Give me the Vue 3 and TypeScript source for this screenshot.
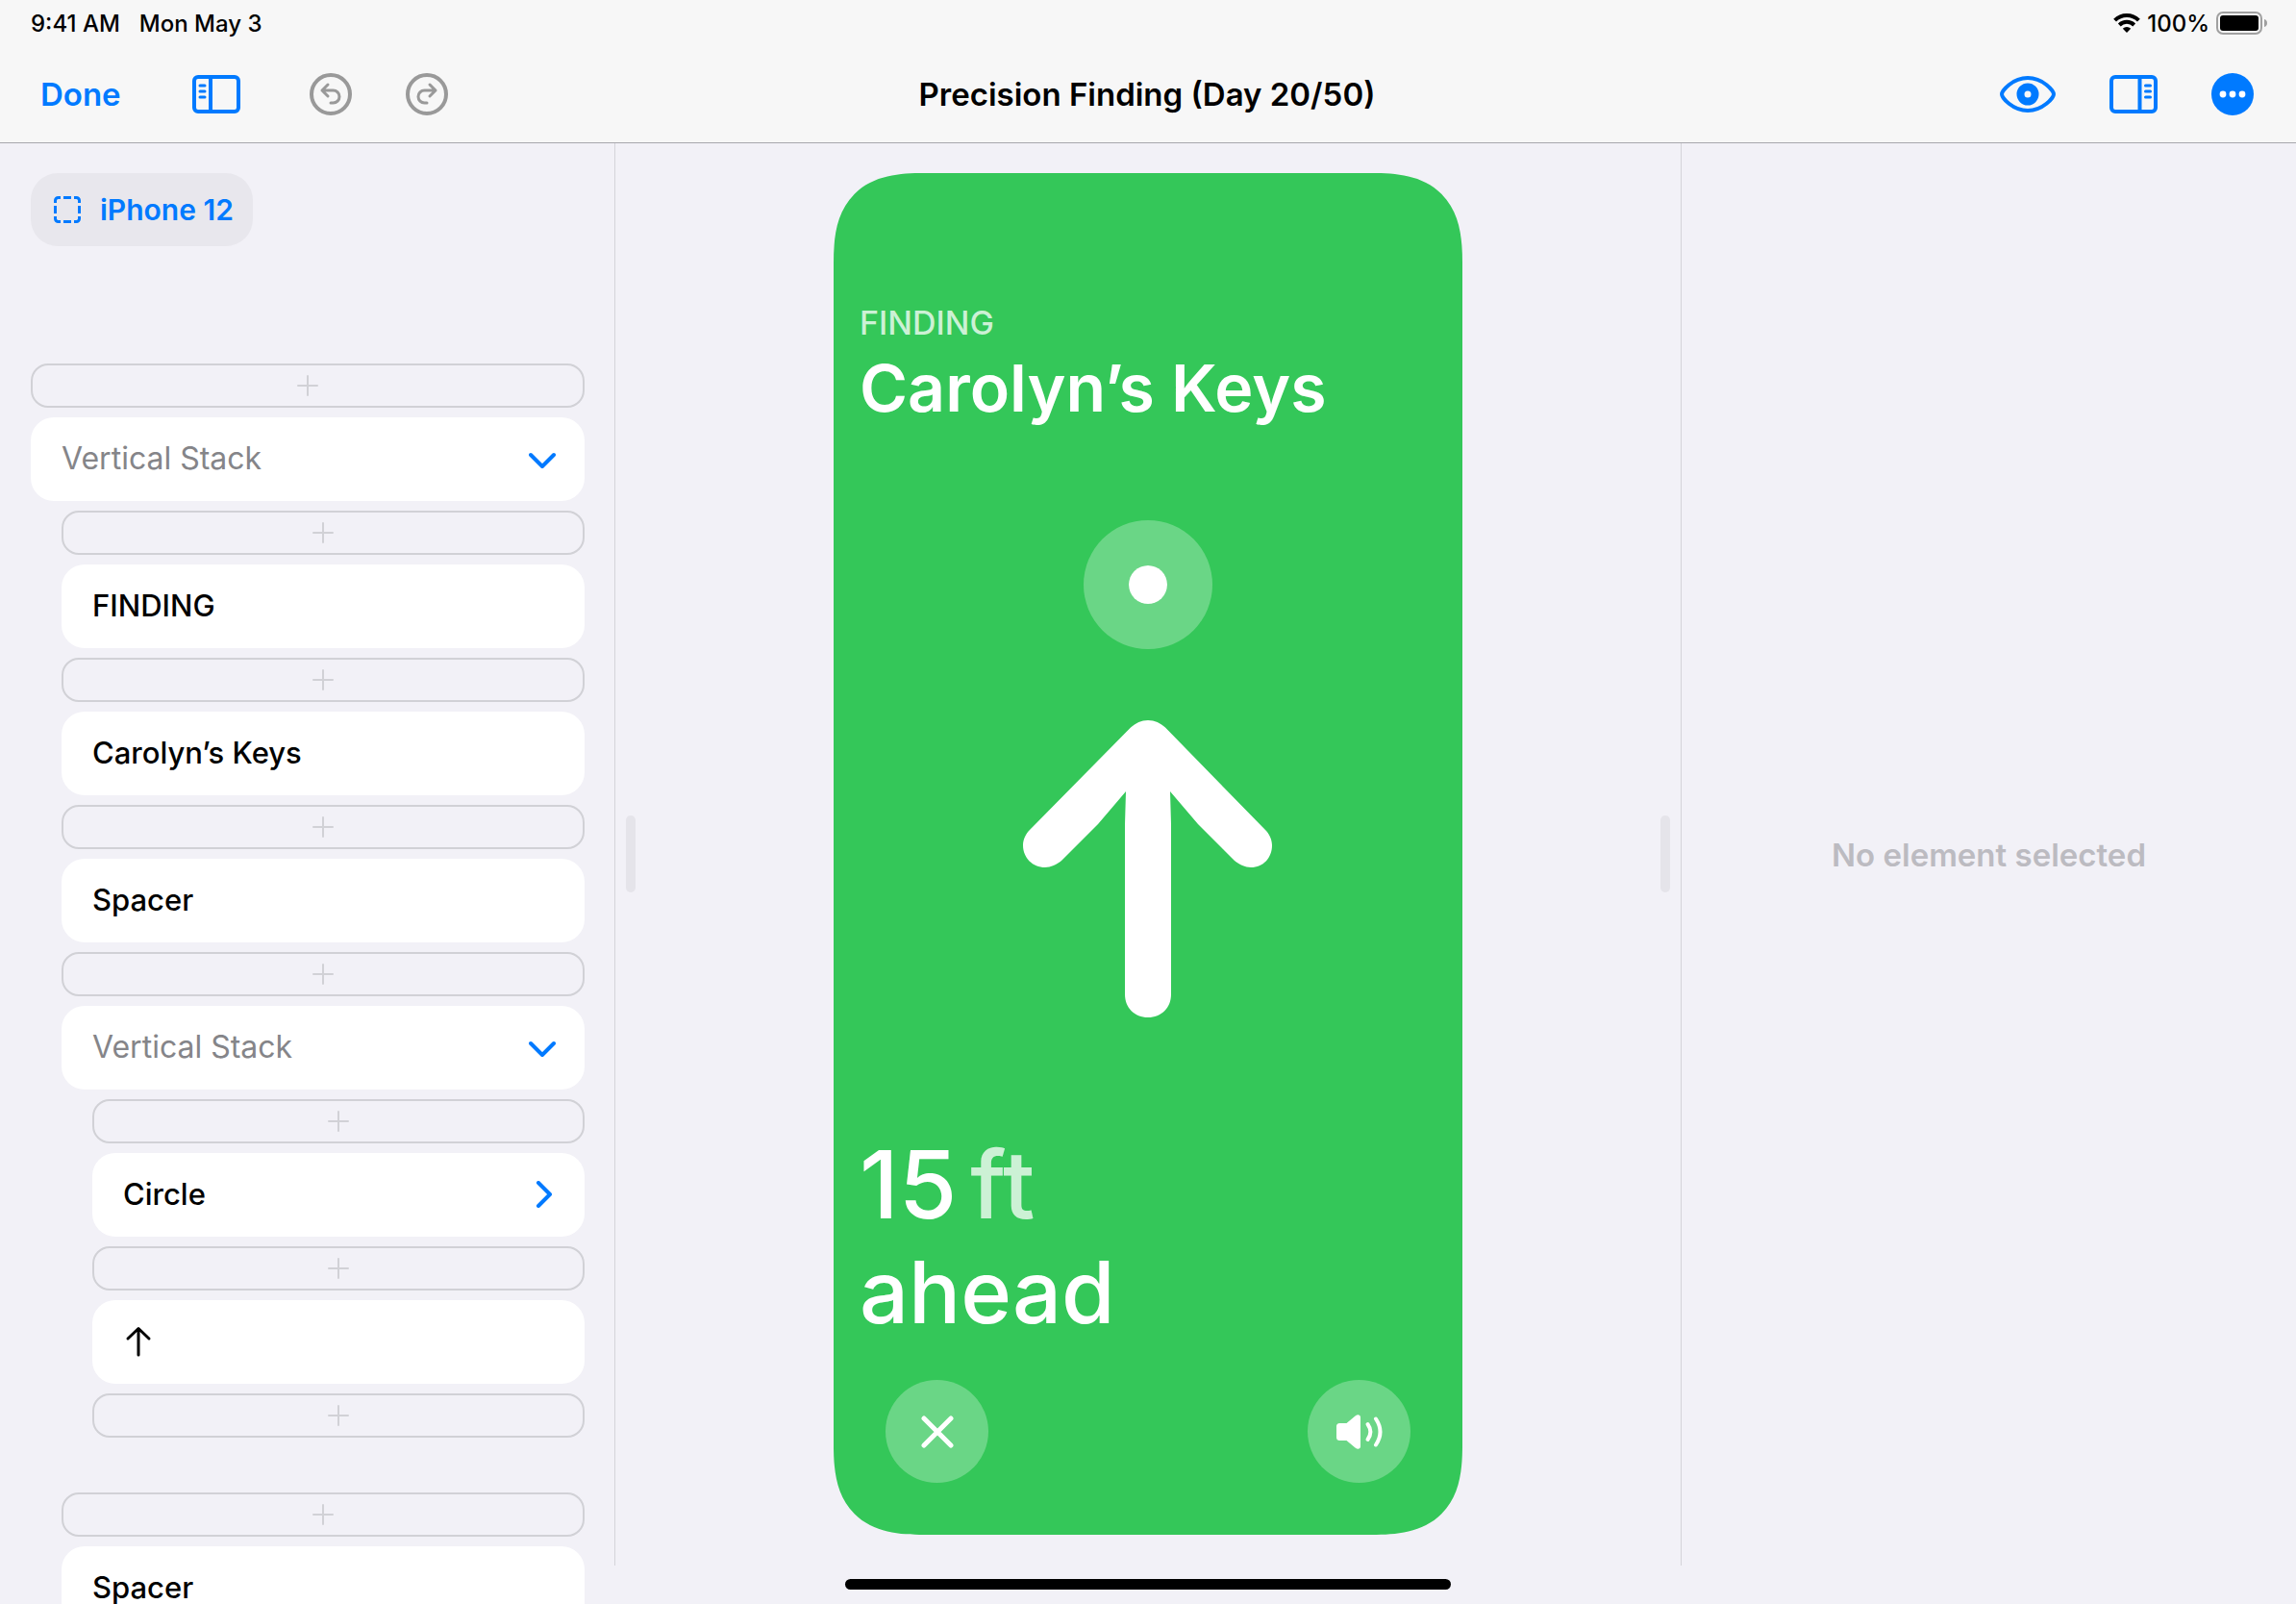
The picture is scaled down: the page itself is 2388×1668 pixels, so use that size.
<script setup lang="ts">
import { computed, ref } from 'vue'

interface LayerNode {
  id: number
  label: string
  level: number
  kind: 'stack' | 'element' | 'symbol'
  disclosure?: 'down' | 'right'
}

interface Slot {
  id: number
  level: number
  groupStart?: boolean
}

type Row = { type: 'slot'; slot: Slot } | { type: 'node'; node: LayerNode }

const title = ref('Precision Finding (Day 20/50)')

const rows = computed<Row[]>(() => [
  { type: 'slot', slot: { id: 1, level: 0 } },
  { type: 'node', node: { id: 1, label: 'Vertical Stack', level: 0, kind: 'stack', disclosure: 'down' } },
  { type: 'slot', slot: { id: 2, level: 1 } },
  { type: 'node', node: { id: 2, label: 'FINDING', level: 1, kind: 'element' } },
  { type: 'slot', slot: { id: 3, level: 1 } },
  { type: 'node', node: { id: 3, label: 'Carolyn’s Keys', level: 1, kind: 'element' } },
  { type: 'slot', slot: { id: 4, level: 1 } },
  { type: 'node', node: { id: 4, label: 'Spacer', level: 1, kind: 'element' } },
  { type: 'slot', slot: { id: 5, level: 1 } },
  { type: 'node', node: { id: 5, label: 'Vertical Stack', level: 1, kind: 'stack', disclosure: 'down' } },
  { type: 'slot', slot: { id: 6, level: 2 } },
  { type: 'node', node: { id: 6, label: 'Circle', level: 2, kind: 'element', disclosure: 'right' } },
  { type: 'slot', slot: { id: 7, level: 2 } },
  { type: 'node', node: { id: 7, label: 'Arrow up', level: 2, kind: 'symbol' } },
  { type: 'slot', slot: { id: 8, level: 2 } },
  { type: 'slot', slot: { id: 9, level: 1, groupStart: true } },
  { type: 'node', node: { id: 8, label: 'Spacer', level: 1, kind: 'element' } },
])
</script>

<template>
  <div class="app">
    <header class="top">
      <div class="status">
        <div class="status-left">
          <span>9:41 AM</span>
          <span>Mon May 3</span>
        </div>
        <div class="status-right">
          <svg class="wifi" width="28" height="20" viewBox="0 0 28 20" aria-hidden="true">
            <g fill="none" stroke="#000" stroke-width="4">
              <path d="M1.6 7.2a17.5 17.5 0 0 1 24.8 0" />
              <path d="M6.3 12a11 11 0 0 1 15.4 0" />
            </g>
            <path d="M14 20l-4.2-4.3a6 6 0 0 1 8.4 0z" />
          </svg>
          <span>100%</span>
          <svg class="battery" width="54" height="24" viewBox="0 0 54 24" aria-hidden="true">
            <rect x="1" y="1" width="46" height="22" rx="6" fill="none" stroke="#a0a0a0" stroke-width="2" />
            <rect x="4" y="4" width="40" height="16" rx="3" />
            <path d="M50 8c2 .6 3 2 3 4s-1 3.400-3 4z" fill="#a0a0a0" />
          </svg>
        </div>
      </div>
      <nav class="bar">
        <div class="bar-left">
          <button class="done" type="button">Done</button>
          <button class="icon" type="button" aria-label="Toggle layers">
            <svg width="50" height="40" viewBox="0 0 50 40" fill="none" stroke="#007aff" stroke-width="4">
              <rect x="2" y="2" width="46" height="36" rx="4" />
              <path d="M19 2v36" />
              <path d="M8 11h5M8 17h5M8 23h5" stroke-width="3" stroke-linecap="round" />
            </svg>
          </button>
          <div class="history">
            <button class="icon" type="button" aria-label="Undo">
              <svg width="44" height="44" viewBox="0 0 44 44" fill="none" stroke="#999" stroke-width="3" stroke-linecap="round" stroke-linejoin="round">
                <circle cx="22" cy="22" r="20" stroke-width="4" />
                <path d="M19 12l-6 6 6 6M13 18h11.500a6.500 6.500 0 0 1 0 13H22" />
              </svg>
            </button>
            <button class="icon" type="button" aria-label="Redo">
              <svg width="44" height="44" viewBox="0 0 44 44" fill="none" stroke="#999" stroke-width="3" stroke-linecap="round" stroke-linejoin="round">
                <circle cx="22" cy="22" r="20" stroke-width="4" />
                <path d="M25 12l6 6-6 6M31 18H19.500a6.500 6.500 0 0 0 0 13H22" />
              </svg>
            </button>
          </div>
        </div>
        <h1 class="title">{{ title }}</h1>
        <div class="bar-right">
          <button class="icon" type="button" aria-label="Preview">
            <svg width="58" height="38" viewBox="0 0 58 38" fill="none" stroke="#007aff">
              <path d="M2 19C2 15.500 13 2 29 2s27 13.500 27 17-11 17-27 17S2 22.500 2 19z" stroke-width="4" />
              <circle cx="29" cy="19" r="7.500" stroke-width="8" />
            </svg>
          </button>
          <button class="icon" type="button" aria-label="Toggle inspector">
            <svg width="50" height="40" viewBox="0 0 50 40" fill="none" stroke="#007aff" stroke-width="4">
              <rect x="2" y="2" width="46" height="36" rx="4" />
              <path d="M31.500 2v36" />
              <path d="M37.500 11h5M37.500 17h5M37.500 23h5" stroke-width="3" stroke-linecap="round" />
            </svg>
          </button>
          <button class="icon" type="button" aria-label="More">
            <svg width="44" height="44" viewBox="0 0 44 44">
              <circle cx="22" cy="22" r="22" fill="#007aff" />
              <g fill="#fff">
                <circle cx="12" cy="22" r="3.400" />
                <circle cx="22" cy="22" r="3.400" />
                <circle cx="32" cy="22" r="3.400" />
              </g>
            </svg>
          </button>
        </div>
      </nav>
    </header>

    <main class="workspace">
      <aside class="layers">
        <button class="device" type="button">
          <svg width="28" height="28" viewBox="0 0 28 28" fill="none" stroke="#007aff" stroke-width="3">
            <path d="M1.500 7V4.500a3 3 0 0 1 3-3H7M21 1.500h2.500a3 3 0 0 1 3 3V7M26.500 21v2.500a3 3 0 0 1-3 3H21M7 26.500H4.500a3 3 0 0 1-3-3V21" />
            <path d="M10 1.500h8M10 26.500h8M1.500 10v8M26.500 10v8" />
          </svg>
          <span>iPhone 12</span>
        </button>
        <ul class="tree">
          <li
            v-for="row in rows"
            :key="row.type === 'slot' ? 's' + row.slot.id : 'n' + row.node.id"
            :class="['indent-' + (row.type === 'slot' ? row.slot.level : row.node.level), { 'group-start': row.type === 'slot' && row.slot.groupStart }]"
          >
            <button v-if="row.type === 'slot'" class="slot" type="button" aria-label="Add element">
              <svg width="22" height="22" viewBox="0 0 22 22" stroke="#d1d1d6" stroke-width="2" stroke-linecap="round">
                <path d="M11 1v20M1 11h20" />
              </svg>
            </button>
            <button v-else :class="['card', row.node.kind]" type="button" :aria-label="row.node.label">
              <svg v-if="row.node.kind === 'symbol'" class="glyph" width="32" height="32" viewBox="0 0 32 32" fill="none" stroke="#000" stroke-width="3" stroke-linecap="round" stroke-linejoin="round">
                <path d="M16 30V3M5 13L16 2.500 27 13" />
              </svg>
              <span v-else>{{ row.node.label }}</span>
              <svg v-if="row.node.disclosure" :class="['chevron', row.node.disclosure]" width="28" height="28" viewBox="0 0 28 28" fill="none" stroke="#007aff" stroke-width="4" stroke-linecap="round" stroke-linejoin="round">
                <path v-if="row.node.disclosure === 'down'" d="M2 10l12 12 12-12" />
                <path v-else d="M10 2l12 12-12 12" />
              </svg>
            </button>
          </li>
        </ul>
      </aside>

      <section class="canvas">
        <div class="handle"></div>
        <div class="phone">
          <div class="heading">
            <p class="eyebrow">FINDING</p>
            <h2 class="item">Carolyn’s Keys</h2>
          </div>
          <div class="compass">
            <div class="target"></div>
            <svg width="260" height="309" viewBox="0 0 260 309" fill="#fff" aria-label="Ahead">
              <path d="M130 0c-7 0-13 3-18 7.500L7 114c-4 4-7 10-7 16 0 13 10 23 23 23 6 0 12-3 17-7l38-38 29-34-1 34v177c0 14 10 24 24 24s24-10 24-24V108l-1-34 29 34 38 38c5 4 11 7 17 7 13 0 22-10 22-23 0-6-3-12-7-16L148 7.500C143 3 137 0 130 0z" />
            </svg>
          </div>
          <div class="guidance">
            <p class="distance">15<span class="unit">ft</span></p>
            <p class="direction">ahead</p>
          </div>
          <div class="actions">
            <button class="round" type="button" aria-label="Close">
              <svg width="34" height="34" viewBox="0 0 34 34" fill="none" stroke="#fff" stroke-width="5" stroke-linecap="round">
                <path d="M3 3l28 28M31 3L3 31" />
              </svg>
            </button>
            <button class="round" type="button" aria-label="Play sound">
              <svg width="48" height="36" viewBox="0 0 48 36" fill="none" stroke="#fff" stroke-linecap="round">
                <path d="M0 13c0-3 1-4 4-4h6.500L19.500 1.500C22 -.5 25 0 25 3v30c0 3-3 3.500-5.500 1.500L10.500 27H4c-3 0-4-1-4-4z" fill="#fff" stroke="none" />
                <path d="M32.500 10c3.600 5 3.600 11 0 16" stroke-width="4" />
                <path d="M41 4.500c6 9 6 18 0 27" stroke-width="4" />
              </svg>
            </button>
          </div>
        </div>
        <div class="handle"></div>
      </section>

      <aside class="inspector">
        <p>No element selected</p>
      </aside>
    </main>
    <div class="home-indicator"></div>
  </div>
</template>

<style>
body {
  margin: 0;
  background: #f2f1f7;
}
</style>

<style scoped>
.app {
  position: relative;
  display: flex;
  flex-direction: column;
  height: 100vh;
  overflow: hidden;
  background: #f2f1f7;
  color: #000;
  font-family: Inter, 'Liberation Sans', sans-serif;
}

button {
  display: flex;
  align-items: center;
  padding: 0;
  border: 0;
  background: none;
  color: inherit;
  font: inherit;
  cursor: pointer;
}

svg {
  display: block;
  flex: none;
}

h1,
h2,
p,
ul {
  margin: 0;
  padding: 0;
}

.top {
  flex: none;
  border-bottom: 1px solid #a7a7ad;
  background: #f7f7f7;
}

.status {
  display: flex;
  justify-content: space-between;
  align-items: center;
  height: 48px;
  padding: 0 29px 0 32px;
  font-size: 24px;
  font-weight: 500;
}

.status-left {
  display: flex;
  gap: 20px;
}

.status-right {
  display: flex;
  align-items: center;
  gap: 7px;
}

.bar {
  display: grid;
  grid-template-columns: 1fr auto 1fr;
  align-items: center;
  height: 100px;
  padding: 0 44px 0 42px;
}

.bar-left,
.history,
.bar-right {
  display: flex;
  align-items: center;
}

.bar-left {
  gap: 72px;
}

.history,
.bar-right {
  gap: 56px;
}

.bar-right {
  justify-content: flex-end;
}

.done {
  margin-right: 2px;
  color: #007aff;
  font-size: 33px;
  font-weight: 600;
}

.title {
  font-size: 33px;
  font-weight: 600;
}

.workspace {
  display: grid;
  grid-template-columns: 639fr 1110fr 639fr;
  flex: 1;
  min-height: 0;
}

.layers {
  padding: 31px 31px 0 32px;
  overflow: hidden;
}

.device {
  gap: 20px;
  height: 76px;
  padding: 0 20px 0 24px;
  border-radius: 28px;
  background: #e8e7ed;
  color: #007aff;
  font-size: 30px;
  font-weight: 600;
}

.tree {
  display: flex;
  flex-direction: column;
  gap: 10px;
  margin-top: 122px;
  list-style: none;
}

.indent-1 {
  padding-left: 32px;
}

.indent-2 {
  padding-left: 64px;
}

.group-start {
  margin-top: 47px;
}

.slot {
  justify-content: center;
  width: 100%;
  height: 46px;
  border: 2px solid #d1d1d6;
  border-radius: 18px;
}

.card {
  justify-content: space-between;
  width: 100%;
  height: 87px;
  padding: 0 30px 2px 32px;
  border-radius: 24px;
  background: #fff;
  font-size: 31px;
  font-weight: 500;
}

.stack {
  color: #858589;
  font-size: 32px;
  font-weight: 400;
}

.canvas {
  display: flex;
  justify-content: space-between;
  align-items: center;
  min-height: 0;
  margin-bottom: 40px;
  padding: 31px 11px 32px;
  border: solid #d4d4d9;
  border-width: 0 1px;
}

.handle {
  width: 10px;
  height: 80px;
  border-radius: 5px;
  background: #e5e4ea;
}

.phone {
  display: flex;
  flex-direction: column;
  box-sizing: border-box;
  height: 100%;
  aspect-ratio: 654 / 1416;
  padding: 134px 27px 54px;
  border-radius: 80px;
  background: #34c759;
  color: #fff;
}

@supports (corner-shape: squircle) {
  .phone {
    border-radius: 94px;
    corner-shape: superellipse(1.4);
  }
}

.eyebrow {
  color: rgba(255, 255, 255, 0.75);
  font-size: 34px;
  line-height: 44px;
  font-weight: 500;
}

.item {
  font-size: 68px;
  line-height: 90px;
  font-weight: 600;
  white-space: nowrap;
}

.compass {
  display: flex;
  flex-direction: column;
  align-items: center;
  gap: 74px;
  margin-top: 93px;
}

.target {
  width: 40px;
  height: 40px;
  border: 47px solid rgba(255, 255, 255, 0.27);
  border-radius: 50%;
  background: #fff;
  background-clip: padding-box;
}

.guidance {
  margin-top: auto;
  line-height: 112px;
  font-weight: 500;
}

.distance {
  font-size: 98px;
}

.direction {
  font-size: 90px;
}

.unit {
  margin-left: 14px;
  color: rgba(255, 255, 255, 0.75);
}

.actions {
  display: flex;
  justify-content: space-between;
  margin-top: 35px;
  padding: 0 27px;
}

.round {
  justify-content: center;
  width: 107px;
  height: 107px;
  border-radius: 50%;
  background: rgba(255, 255, 255, 0.27);
}

.inspector {
  display: flex;
  justify-content: center;
  align-items: center;
  margin-bottom: 40px;
  color: #bcbbc1;
  font-size: 33px;
  font-weight: 600;
}

.home-indicator {
  position: absolute;
  bottom: 15px;
  left: 50%;
  width: 630px;
  height: 11px;
  margin-left: -315px;
  border-radius: 6px;
  background: #000;
}
</style>
